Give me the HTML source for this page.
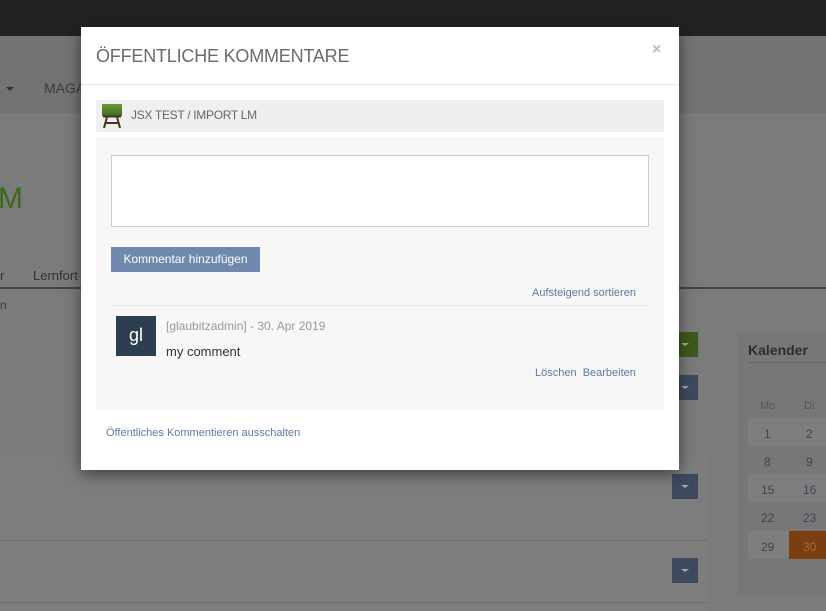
<!DOCTYPE html>
<html><head><meta charset="utf-8"><style>
*{box-sizing:border-box;margin:0;padding:0}
body{width:826px;height:611px;overflow:hidden;position:relative;background:#7b7b7b;font-family:"Liberation Sans",sans-serif}
.a{position:absolute}
.dd{position:absolute;width:26px;height:25px;background:#3d4a5e}
.dd:after{content:"";position:absolute;left:9px;top:11px;border-left:4px solid transparent;border-right:4px solid transparent;border-top:3px solid #aaa}
.t{font-size:12px;color:#3c4656}
</style></head><body>
<div class="a" style="left:0;top:0;width:826px;height:36px;background:#222"></div>
<div class="a" style="left:0;top:36px;width:826px;height:77px;background:#737373"></div>
<div class="a" style="left:6px;top:87px;border-left:4px solid transparent;border-right:4px solid transparent;border-top:4px solid #333"></div>
<div class="a" style="left:44px;top:80px;font-size:14px;color:#3a3a3a">MAGA</div>
<div class="a" style="left:-2px;top:182px;font-size:30px;color:#3b6a1a">M</div>
<div class="a" style="left:0;top:268px;font-size:13px;color:#333">r</div>
<div class="a" style="left:33px;top:268px;font-size:13px;color:#333">Lernfort</div>
<div class="a" style="left:0;top:287px;width:826px;height:2px;background:#444"></div>
<div class="a" style="left:0;top:298px;font-size:12px;color:#2c3e55">n</div>
<div class="a" style="left:0;top:456px;width:708px;height:155px;background:#7d7d7d"></div>
<div class="a" style="left:0;top:540px;width:708px;height:1px;background:#6e6e6e"></div>
<div class="a" style="left:0;top:602px;width:708px;height:1px;background:#6e6e6e"></div>
<div class="dd" style="left:672px;top:332px;background:#3d5a1d"></div>
<div class="dd" style="left:672px;top:375px"></div>
<div class="dd" style="left:672px;top:474px"></div>
<div class="dd" style="left:672px;top:558px"></div>
<div class="a" style="left:738px;top:332px;width:88px;height:264px;background:#777"></div>
<div class="a" style="left:748px;top:342px;font-size:14px;font-weight:bold;color:#2e2e2e">Kalender</div>
<div class="a" style="left:748px;top:362px;width:78px;height:1px;background:#666"></div>
<div class="a t" style="left:760px;top:400px;color:#555;font-size:11px">Mo</div>
<div class="a t" style="left:804px;top:400px;color:#555;font-size:11px">Di</div>
<div class="a" style="left:748px;top:418px;width:78px;height:28px;background:#7e7e7e"></div>
<div class="a" style="left:748px;top:474px;width:78px;height:28px;background:#7e7e7e"></div>
<div class="a" style="left:748px;top:531px;width:41px;height:28px;background:#7e7e7e"></div>
<div class="a" style="left:789px;top:531px;width:37px;height:28px;background:#7a3e12"></div>
<div class="a t" style="left:764px;top:427px">1</div><div class="a t" style="left:806px;top:427px">2</div>
<div class="a t" style="left:764px;top:455px">8</div><div class="a t" style="left:806px;top:455px">9</div>
<div class="a t" style="left:761px;top:483px">15</div><div class="a t" style="left:803px;top:483px">16</div>
<div class="a t" style="left:761px;top:511px">22</div><div class="a t" style="left:803px;top:511px">23</div>
<div class="a t" style="left:761px;top:540px">29</div><div class="a t" style="left:803px;top:540px;color:#a06a40">30</div>

<div class="a" style="left:81px;top:27px;width:598px;height:443px;background:#fff;box-shadow:0 4px 14px rgba(0,0,0,.5)">
 <div class="a" style="left:15px;top:19px;font-size:18px;color:#6b6b6b;letter-spacing:-0.2px">ÖFFENTLICHE KOMMENTARE</div>
 <div class="a" style="left:571px;top:14px;font-size:16px;color:#bbb;font-weight:bold">×</div>
 <div class="a" style="left:0;top:57px;width:598px;height:1px;background:#e5e5e5"></div>
 <div class="a" style="left:15px;top:73px;width:568px;height:32px;background:#efefef">
  <div class="a" style="left:6px;top:4px;width:20px;height:12px;background:linear-gradient(#6a9a34,#3e6e1c)"></div>
  <svg class="a" style="left:6px;top:15px" width="20" height="14"><path d="M1 1.5H19M5 2L2 13M15 2L18 13M4 8H16" stroke="#4a3020" stroke-width="2" fill="none"/></svg>
  <div class="a" style="left:35px;top:8px;font-size:12px;color:#666;letter-spacing:-0.3px">JSX TEST / IMPORT LM</div>
 </div>
 <div class="a" style="left:15px;top:110px;width:568px;height:273px;background:#f7f7f7">
  <div class="a" style="left:15px;top:18px;width:538px;height:72px;background:#fff;border:1px solid #ccc"></div>
  <div class="a" style="left:15px;top:110px;width:149px;height:25px;background:#6e89ad;color:#fff;font-size:12px;line-height:25px;text-align:center">Kommentar hinzufügen</div>
  <div class="a" style="left:436px;top:150px;font-size:11px;color:#5e7aa0">Aufsteigend sortieren</div>
  <div class="a" style="left:15px;top:168px;width:538px;height:1px;background:#e8e8e8"></div>
  <div class="a" style="left:20px;top:179px;width:40px;height:40px;background:#2c3e50;color:#fff;font-size:18px;line-height:38px;text-align:center">gl</div>
  <div class="a" style="left:70px;top:182px;font-size:12px;color:#999">[glaubitzadmin] - 30. Apr 2019</div>
  <div class="a" style="left:70px;top:207px;font-size:13px;color:#333">my comment</div>
  <div class="a" style="left:439px;top:230px;font-size:11px;color:#5e7aa0">Löschen&nbsp; Bearbeiten</div>
 </div>
 <div class="a" style="left:25px;top:400px;font-size:11px;color:#5e7aa0">Öffentliches Kommentieren ausschalten</div>
</div>
</body></html>
